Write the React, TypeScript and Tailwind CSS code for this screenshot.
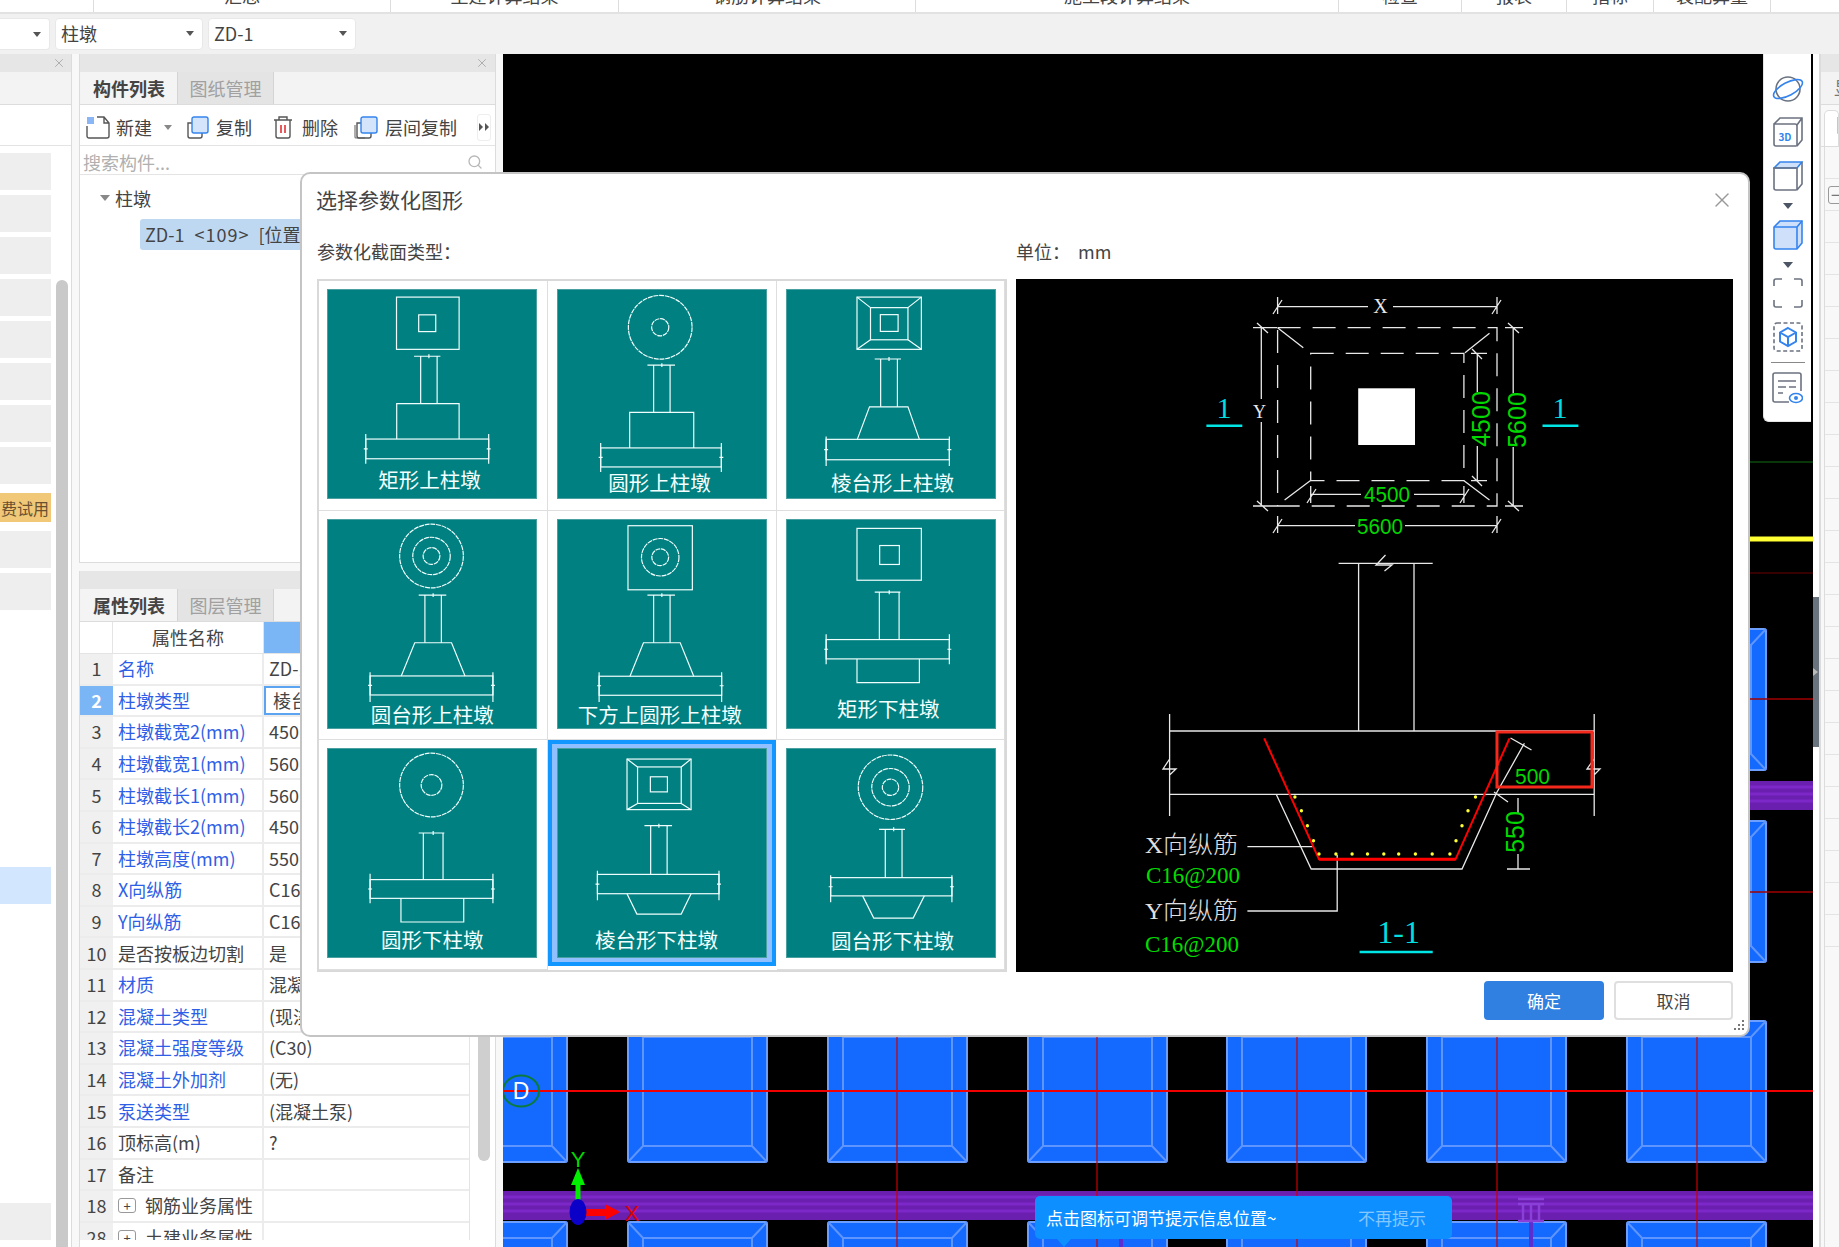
import type { ReactNode } from "react";
import { Search, X } from "lucide-react";

const topTabs = [
  { w: "w-[94px]", label: "" },
  { w: "w-[297px]", label: "汇总" },
  { w: "w-[228px]", label: "土建计算结果" },
  { w: "w-[297px]", label: "钢筋计算结果" },
  { w: "w-[423px]", label: "施工段计算结果" },
  { w: "w-[123px]", label: "检查" },
  { w: "w-[105px]", label: "报表" },
  { w: "w-[87px]", label: "指标" },
  { w: "w-[117px]", label: "装配算量" },
];

const rows: { n: number; name: string; value: string; blue?: boolean; plus?: boolean }[] = [
  { n: 1, name: "名称", value: "ZD-1", blue: true },
  { n: 2, name: "柱墩类型", value: "棱台形下柱墩", blue: true },
  { n: 3, name: "柱墩截宽2(mm)", value: "450", blue: true },
  { n: 4, name: "柱墩截宽1(mm)", value: "560", blue: true },
  { n: 5, name: "柱墩截长1(mm)", value: "560", blue: true },
  { n: 6, name: "柱墩截长2(mm)", value: "450", blue: true },
  { n: 7, name: "柱墩高度(mm)", value: "550", blue: true },
  { n: 8, name: "X向纵筋", value: "C16@200", blue: true },
  { n: 9, name: "Y向纵筋", value: "C16@200", blue: true },
  { n: 10, name: "是否按板边切割", value: "是" },
  { n: 11, name: "材质", value: "混凝土", blue: true },
  { n: 12, name: "混凝土类型", value: "(现浇混凝土)", blue: true },
  { n: 13, name: "混凝土强度等级", value: "(C30)", blue: true },
  { n: 14, name: "混凝土外加剂", value: "(无)", blue: true },
  { n: 15, name: "泵送类型", value: "(混凝土泵)", blue: true },
  { n: 16, name: "顶标高(m)", value: "?" },
  { n: 17, name: "备注", value: "" },
  { n: 18, name: "钢筋业务属性", value: "", plus: true },
  { n: 28, name: "土建业务属性", value: "", plus: true },
];

function Ring({ cx, cy, r }: { cx: number; cy: number; r: number }) {
  return <circle cx={cx} cy={cy} r={r} strokeDasharray="5 0.8" />;
}

function RectPlan({ o, i }: { o: number[]; i: number[] }) {
  return (
    <>
      <rect x={o[0]} y={o[1]} width={o[2] - o[0]} height={o[3] - o[1]} />
      <rect x={i[0]} y={i[1]} width={i[2] - i[0]} height={i[3] - i[1]} />
    </>
  );
}

function FrustumPlan({ o, m, i }: { o: number[]; m: number[]; i: number[] }) {
  return (
    <>
      <RectPlan o={o} i={m} />
      <rect x={i[0]} y={i[1]} width={i[2] - i[0]} height={i[3] - i[1]} />
      <path
        d={`M${o[0]} ${o[1]}L${m[0]} ${m[1]}M${o[2]} ${o[1]}L${m[2]} ${m[1]}M${o[0]} ${o[3]}L${m[0]} ${m[3]}M${o[2]} ${o[3]}L${m[2]} ${m[3]}`}
      />
    </>
  );
}

const tiles: {
  label: string;
  lx: number;
  ly: number;
  plan: ReactNode;
  col: number[];
  slab: number[];
  ped: string;
  selected?: boolean;
}[] = [
  {
    label: "矩形上柱墩",
    lx: 103,
    ly: 200,
    plan: <RectPlan o={[69.5, 6.7, 133, 59.7]} i={[92, 24.7, 109.3, 41.7]} />,
    col: [66.7, 87.3, 114, 94, 110.7, 114.7],
    slab: [38.3, 163, 150.7, 170.7, 145.7, 175.7],
    ped: "69.7,150.7 69.7,114.7 133,114.7 133,150.7",
  },
  {
    label: "圆形上柱墩",
    lx: 103,
    ly: 203,
    plan: (
      <>
        <Ring cx={103.7} cy={37.3} r={32.3} />
        <Ring cx={103.7} cy={37.3} r={8.7} />
      </>
    ),
    col: [75.7, 90.7, 118.7, 97, 113.7, 123.7],
    slab: [43.3, 165.7, 159.7, 179, 154.7, 184],
    ped: "72.7,159.7 72.7,123.7 137.7,123.7 137.7,159.7",
  },
  {
    label: "棱台形上柱墩",
    lx: 107,
    ly: 203,
    plan: <FrustumPlan o={[71, 6.7, 136.3, 59.7]} m={[84.7, 17.4, 122.7, 50]} i={[94.7, 24.5, 112.7, 41.5]} />,
    col: [69.5, 89, 115.7, 95, 112, 118],
    slab: [39.7, 164.7, 151, 171.7, 148, 178],
    ped: "71.3,151 83.7,118 122.7,118 134.3,151",
  },
  {
    label: "圆台形上柱墩",
    lx: 105.7,
    ly: 205,
    plan: (
      <>
        <Ring cx={105} cy={36} r={32.3} />
        <Ring cx={105} cy={36} r={19} />
        <Ring cx={105} cy={36} r={8.5} />
      </>
    ),
    col: [75.7, 92, 120, 98.3, 115, 124],
    slab: [42.7, 167.3, 157.7, 177, 154, 184],
    ped: "74.3,157.7 88,124 125.3,124 139,157.7",
  },
  {
    label: "下方上圆形上柱墩",
    lx: 103.3,
    ly: 205,
    plan: (
      <>
        <rect x={71} y={5.3} width={65.3} height={65} />
        <Ring cx={103.7} cy={37.3} r={19} />
        <Ring cx={103.7} cy={37.3} r={8.5} />
      </>
    ),
    col: [75.7, 90.7, 118.7, 97, 113.7, 124],
    slab: [41.7, 166, 158, 177.3, 154, 184],
    ped: "73,158 86.7,124 124,124 137.7,158",
  },
  {
    label: "矩形下柱墩",
    lx: 102.7,
    ly: 199,
    plan: <RectPlan o={[71, 8, 136.3, 60.6]} i={[94, 25.4, 114, 44.6]} />,
    col: [72.7, 89, 115, 93.7, 113.7, 120.8],
    slab: [39.7, 164.7, 120.8, 140.4, 115.5, 145.8],
    ped: "71,140.4 71,164.5 134.3,164.5 134.3,140.4",
  },
  {
    label: "圆形下柱墩",
    lx: 105.7,
    ly: 201.7,
    plan: (
      <>
        <Ring cx={105} cy={36} r={32.3} />
        <Ring cx={105} cy={36} r={10.5} />
      </>
    ),
    col: [84.7, 92, 118, 96.7, 116.7, 132],
    slab: [42.7, 167.3, 132, 151, 126, 156],
    ped: "74,151 74,175 137.7,175 137.7,151",
  },
  {
    label: "棱台形下柱墩",
    lx: 100,
    ly: 201.7,
    selected: true,
    plan: <FrustumPlan o={[70, 9.7, 135, 61]} m={[80.7, 17.7, 125, 54.7]} i={[93.7, 27.7, 111, 43]} />,
    col: [77.3, 87.7, 115.7, 94, 110.7, 126.7],
    slab: [40, 163.3, 126.7, 146.3, 123, 153],
    ped: "70,146.3 80,167 125,167 135,146.3",
  },
  {
    label: "圆台形下柱墩",
    lx: 107,
    ly: 202,
    plan: (
      <>
        <Ring cx={105} cy={38.3} r={32.7} />
        <Ring cx={105} cy={38.3} r={19} />
        <Ring cx={105} cy={38.3} r={8.3} />
      </>
    ),
    col: [81, 93.3, 119.7, 99.7, 116.7, 130],
    slab: [44.3, 167.3, 130, 148.5, 127.5, 155],
    ped: "76.7,148.5 88,171 128,171 139.3,148.5",
  },
];

function Tile({ t }: { t: (typeof tiles)[number] }) {
  const [dy, dx1, dx2, cx1, cx2, cy] = t.col;
  const [x1, x2, y1, y2, e1, e2] = t.slab;
  const mid = (y1 + y2) / 2;
  const m = (cx1 + cx2) / 2;
  return (
    <svg width="210" height="210" viewBox="0 0 211 210" className="block bg-[#008080] border border-[#4aa0a0]">
      <g stroke="#f2ffff" strokeWidth="1.2" fill="none">
        {t.plan}
        <path d={`M${dx1} ${dy}H${dx2}M${cx1} ${dy}V${cy}M${cx2} ${dy}V${cy}M${m} ${dy - 2}v4`} />
        <rect x={x1} y={y1} width={x2 - x1} height={y2 - y1} />
        <path d={`M${x1} ${e1}V${e2}M${x2} ${e1}V${e2}M${x1 - 2} ${mid}h4M${x2 - 2} ${mid}h4`} />
        <polyline points={t.ped} />
      </g>
      <text x={t.lx} y={t.ly} textAnchor="middle" fontSize="20.8" fill="#f4ffff">
        {t.label}
      </text>
    </svg>
  );
}

function Preview() {
  const white = { stroke: "#e8e8e8", strokeWidth: 1.3, fill: "none" };
  const num = { fill: "#00d800", fontFamily: "'Liberation Sans', sans-serif" };
  const serif = "'Liberation Serif', 'Noto Sans CJK SC', serif";
  return (
    <svg width="717" height="693" viewBox="0 0 717 693" className="block bg-black">
      <g {...white}>
        <path d="M261.6 27.7H352M377 27.7H481M261.6 18V35M481 18V35M257 35L266 21M476 35L485 21" />
        <rect x="261.6" y="48.7" width="219.4" height="178.3" strokeDasharray="23 12" />
        <rect x="294.7" y="74.3" width="153.2" height="127.4" strokeDasharray="23 12" />
        <path d="M261.6 48.7L287.3 68.7M473.5 54.3L449 73.7M268.6 221L294.2 201.7M473.5 221L448 201.7" />
        <path d="M245.3 48.7V120M245.3 143V227M237 48.7H261M237 227H261M241 44L252 54M241 222L252 232" />
        <path d="M497.2 48.7V114M497.2 168V227M489 48.7H507M489 227H507M492 44L503 54M492 222L503 232" />
        <path d="M461.3 74.3V113M461.3 167V201.7M455 74.3H471M455 201.7H471M456 70L466 80M456 197L466 207" />
        <path d="M294.7 215.3H345M398 215.3H447.9M294.7 207V224M447.9 207V224M291 224L300 210M444 224L453 210" />
        <path d="M261.6 246.7H339M389 246.7H481M261.6 237V254M481 237V254M257 254L266 240M476 254L485 240" />
        <path d="M322.6 284.3H416.7M342.6 284.3V452M398 284.3V452M369.5 276L360 286H376L368.5 292" />
        <path d="M153.6 452H578.2M153.6 515.3H578.2M153.6 435V537M578.2 435V537M153.6 480L147 490H160L153.6 496M578 480L571 490H584L578 496" />
        <polyline points="260.2,515.3 295.2,590 446,590 480,515.3" />
        <path d="M480.5 514L508.4 464.3M494.5 459L515.5 471M478 513L492 523" />
        <path d="M502 519V534M502 575V590M491 590H514" />
        <path d="M231.4 567.7H296.7M231.4 632H321.2V576" />
      </g>
      <rect x="342.2" y="109.3" width="56.8" height="56.7" fill="#fff" />
      <polyline points="248.2,459.3 303,580.3 439.5,580.3 493.5,459.3" fill="none" stroke="#f00" strokeWidth="2" />
      <path d="M303 580.3H439.5" stroke="#f00" strokeWidth="3" />
      <rect x="481" y="453" width="95" height="55" fill="none" stroke="#f5281c" strokeWidth="3" />
      <g fill="#ffff33">
        {[
          [303, 575],
          [319.9, 575],
          [336.1, 575],
          [351.5, 575],
          [367.8, 575],
          [382.7, 575],
          [399.4, 575],
          [416.2, 575],
          [433.9, 575],
          [278.9, 518],
          [285.4, 531.7],
          [291.4, 546.7],
          [297.5, 561.7],
          [459.5, 518],
          [452, 531.7],
          [446, 546.7],
          [440, 561.7],
        ].map(([x, y]) => (
          <circle key={`${x}-${y}`} cx={x} cy={y} r="1.7" />
        ))}
      </g>
      <text x="364.5" y="34" textAnchor="middle" fontSize="20" fill="#e8e8e8" fontFamily={serif}>X</text>
      <text x="243.5" y="139" textAnchor="middle" fontSize="18" fill="#e8e8e8" fontFamily={serif}>Y</text>
      <g fontSize="25" {...num}>
        <text transform="rotate(-90 465 140)" x="465" y="149" textAnchor="middle">4500</text>
        <text transform="rotate(-90 501 141)" x="501" y="150" textAnchor="middle">5600</text>
        <text transform="rotate(-90 499 553)" x="499" y="562" textAnchor="middle">550</text>
      </g>
      <g fontSize="22" {...num}>
        <text x="348" y="223" textLength="46" lengthAdjust="spacingAndGlyphs">4500</text>
        <text x="341" y="255" textLength="46" lengthAdjust="spacingAndGlyphs">5600</text>
        <text x="499" y="505" textLength="35" lengthAdjust="spacingAndGlyphs">500</text>
      </g>
      <g fontSize="30" fill="#00dede" fontFamily={serif} textAnchor="middle">
        <text x="208" y="139">1</text>
        <text x="544" y="139">1</text>
        <text x="382.7" y="664" fontSize="32">1-1</text>
      </g>
      <path d="M190.4 146.7H226.3M526.5 146.7H562.4M343.6 673H416.7" stroke="#00e5e5" strokeWidth="2.5" />
      <g fontSize="24" fontFamily={serif} fill="#e0e0e0" fontWeight="300">
        <text x="129" y="574" textLength="93" lengthAdjust="spacingAndGlyphs">X向纵筋</text>
        <text x="129" y="640" textLength="93" lengthAdjust="spacingAndGlyphs">Y向纵筋</text>
      </g>
      <g fontSize="24" fontFamily={serif} fill="#00dc00">
        <text x="130" y="604" textLength="94" lengthAdjust="spacingAndGlyphs">C16@200</text>
        <text x="129" y="673" textLength="94" lengthAdjust="spacingAndGlyphs">C16@200</text>
      </g>
    </svg>
  );
}

function Dialog() {
  return (
    <div className="absolute left-[300px] top-[172px] w-[1450px] h-[865px] bg-white rounded-[10px] border-2 border-[#c4c4c4] flex flex-col z-10">
      <div className="h-[56px] shrink-0 flex items-center justify-between pl-[14px] pr-[14px] pb-[4px]">
        <span className="text-[21px] text-[#444]">选择参数化图形</span>
        <X size={24} strokeWidth={1.4} className="text-[#999]" />
      </div>
      <div className="h-[49px] shrink-0 flex items-center pb-[6px] pl-[15px] text-[18px] text-[#444]">
        <span className="w-[699px]">参数化截面类型：</span>
        <span>单位：&nbsp;&nbsp;mm</span>
      </div>
      <div className="flex pl-[15px] gap-[9px]">
        <div className="w-[690px] h-[693px] border-2 border-[#d9d9d9] grid grid-cols-[229px_229px_1fr] grid-rows-3">
          {tiles.map((t, i) =>
            t.selected ? (
              <div key={t.label} className="w-[228px] h-[226px] border-[4px] border-[#1296ff] bg-[#90c0ff] pt-[4px] pl-[5px]">
                <Tile t={t} />
              </div>
            ) : (
              <div key={t.label} className={i % 3 === 0 ? "border-r border-b border-[#dedede] p-[8px]" : "border-r border-b border-[#dedede] py-[8px] pl-[9px]"}>
                <Tile t={t} />
              </div>
            ),
          )}
        </div>
        <Preview />
      </div>
      <div className="flex justify-end gap-[10px] pr-[15px] pt-[9px]">
        <button className="w-[120px] h-[39px] rounded-[4px] bg-[#2f80e0] text-white text-[17px]">确定</button>
        <button className="w-[119px] h-[39px] rounded-[4px] border-2 border-[#dfdfdf] bg-white text-[17px] text-[#444]">取消</button>
      </div>
      <svg width="14" height="14" viewBox="0 0 14 14" className="absolute right-[2px] bottom-[2px]" fill="#777">
        <rect x="10" y="1" width="2" height="2" />
        <rect x="6" y="5" width="2" height="2" />
        <rect x="10" y="5" width="2" height="2" />
        <rect x="2" y="9" width="2" height="2" />
        <rect x="6" y="9" width="2" height="2" />
        <rect x="10" y="9" width="2" height="2" />
      </svg>
    </div>
  );
}

function CanvasDrawing() {
  const xs = [428, 628, 828, 1028, 1227, 1427, 1627];
  const ys = [629, 821, 1021, 1222];
  return (
    <svg width="1310" height="1193" viewBox="503 54 1310 1193" className="absolute inset-0">
      <path d="M502 462H1813" stroke="#0c4a0c" strokeWidth="1.5" />
      <path d="M502 573H1813" stroke="#4a0000" strokeWidth="1.5" />
      <path d="M502 539H1813" stroke="#ffff33" strokeWidth="5" />
      {ys.map((y) =>
        xs.map((x) => (
          <g key={`${x}-${y}`}>
            <rect x={x} y={y} width="139" height="141" rx="2" fill="#1469ff" stroke="#6c9fff" strokeWidth="2" />
            <path
              d={`M${x + 15} ${y + 16}H${x + 124}V${y + 125}H${x + 15}ZM${x} ${y}L${x + 15} ${y + 16}M${x + 139} ${y}L${x + 124} ${y + 16}M${x} ${y + 141}L${x + 15} ${y + 125}M${x + 139} ${y + 141}L${x + 124} ${y + 125}`}
              fill="none"
              stroke="#5f95ff"
              strokeWidth="2"
            />
          </g>
        )),
      )}
      {[781, 1191].map((y) => (
        <g key={y}>
          <rect x="502" y={y} width="1311" height="29" fill="#6a1fae" />
          <path d={`M502 ${y + 6}H1813M502 ${y + 13}H1813M502 ${y + 20}H1813`} stroke="#7c28c8" strokeWidth="3" />
        </g>
      ))}
      <path d="M897 600V1247M1097 600V1247M1297 600V1247M1497 600V1247M1697 600V1247" stroke="#c80000" strokeWidth="1.2" />
      <path d="M502 699H1813M502 892H1813" stroke="#a00000" strokeWidth="1.5" />
      <path d="M502 1091H1813" stroke="#f00000" strokeWidth="2" />
      <ellipse cx="521" cy="1091" rx="18" ry="15.5" fill="none" stroke="#0c7a3a" strokeWidth="2" />
      <text x="521" y="1099" textAnchor="middle" fontSize="23" fill="#fff" fontFamily="'Liberation Sans', sans-serif">D</text>
      <path d="M1531 1222V1247M1121 1235V1247" stroke="#5a2fd0" strokeWidth="4" />
      <path d="M1518 1199H1544M1518 1204H1544M1523 1204V1222M1531 1204V1222M1539 1204V1222M1518 1221H1544" stroke="#8a3fd8" strokeWidth="2.5" fill="none" />
      <rect x="575.5" y="1182" width="5" height="30" fill="#00f000" />
      <polygon points="571,1185 585,1185 578,1168" fill="#00f000" />
      <text x="578" y="1167" textAnchor="middle" fontSize="22" fontWeight="300" fill="#00d800" fontFamily="'Liberation Sans', sans-serif">Y</text>
      <rect x="578" y="1209" width="28" height="7" fill="#ff0000" />
      <polygon points="605,1204 620,1212 605,1220" fill="#ff0000" />
      <text x="632" y="1221" textAnchor="middle" fontSize="22" fontWeight="300" fill="#e00000" fontFamily="'Liberation Sans', sans-serif">X</text>
      <ellipse cx="578" cy="1212" rx="8.5" ry="13" fill="#0a00c8" />
    </svg>
  );
}

function CadToolbar() {
  const gray = { stroke: "#6b7280", strokeWidth: 1.6, fill: "none" };
  const blue = { stroke: "#3584ee", strokeWidth: 1.6, fill: "none" };
  return (
    <div className="absolute right-[2px] top-0 w-[48px] h-[368px] bg-white rounded-bl-md border-l border-b border-[#e4e4e4] flex flex-col items-center pt-[20px]">
      <svg width="32" height="30" viewBox="0 0 32 30">
        <circle cx="16" cy="15" r="12" {...gray} />
        <ellipse cx="16" cy="15" rx="16" ry="6.5" transform="rotate(-28 16 15)" {...blue} />
      </svg>
      <svg width="30" height="30" viewBox="0 0 30 30" className="mt-[13px]">
        <path d="M1 7h21a2 2 0 0 1 2 2v19a1 1 0 0 1-1 1H3a2 2 0 0 1-2-2ZM1 7l6-6h22v22l-5 6M24 8l5-7" {...gray} />
        <text x="12" y="24" textAnchor="middle" fontSize="10" fontWeight="700" fill="#3584ee">3D</text>
      </svg>
      <svg width="30" height="32" viewBox="0 0 30 32" className="mt-[13px]">
        <path d="M1 8l6-6h22l-5 6Z" fill="#cfe0fb" stroke="#3584ee" strokeWidth="1.6" />
        <path d="M1 8h23v21a1 1 0 0 1-1 1H3a2 2 0 0 1-2-2ZM29 2v22l-5 6" {...gray} />
      </svg>
      <svg width="10" height="6" viewBox="0 0 10 6" className="mt-[11px]" fill="#4b5563">
        <polygon points="0,0 10,0 5,6" />
      </svg>
      <svg width="30" height="32" viewBox="0 0 30 32" className="mt-[10px]">
        <path d="M1 8l6-6h22v22l-5 6H3a2 2 0 0 1-2-2Z" fill="#cfe0fb" stroke="#3584ee" strokeWidth="1.6" />
        <path d="M1 8h23v22M24 8l5-6" {...blue} />
      </svg>
      <svg width="10" height="6" viewBox="0 0 10 6" className="mt-[11px]" fill="#4b5563">
        <polygon points="0,0 10,0 5,6" />
      </svg>
      <svg width="30" height="30" viewBox="0 0 30 30" className="mt-[10px]">
        <path d="M1 8V3a2 2 0 0 1 2-2h6M21 1h6a2 2 0 0 1 2 2v5M29 22v5a2 2 0 0 1-2 2h-6M9 29H3a2 2 0 0 1-2-2v-5" {...gray} />
      </svg>
      <svg width="30" height="30" viewBox="0 0 30 30" className="mt-[14px]">
        <rect x="1" y="1" width="28" height="28" rx="3" strokeDasharray="4 2.5" {...gray} />
        <path d="M15 6l8 4.5v9L15 24l-8-4.5v-9ZM7 10.500l8 4.500 8-4.500M15 15v9" {...blue} strokeWidth="2" />
      </svg>
      <div className="w-[34px] h-[1px] bg-[#888] mt-[10px]" />
      <svg width="31" height="32" viewBox="0 0 31 32" className="mt-[9px]">
        <path d="M29 19V3a2 2 0 0 0-2-2H3a2 2 0 0 0-2 2v25a2 2 0 0 0 2 2h14" {...gray} />
        <path d="M6 9h18M6 15h8M17 15h7M6 21h5" {...gray} />
        <ellipse cx="24" cy="26" rx="6.500" ry="4.500" {...blue} />
        <circle cx="24" cy="26" r="2" fill="#3584ee" />
      </svg>
    </div>
  );
}

function PanelHeader() {
  return (
    <div className="h-[18px] shrink-0 bg-[#e6e6e6] flex items-center justify-end pr-[6px]">
      <X size={14} strokeWidth={1.6} className="text-[#aaa]" />
    </div>
  );
}

function Tabs({ a, b }: { a: string; b: string }) {
  return (
    <div className="h-[33px] shrink-0 bg-[#f3f3f3] border-b border-[#dcdcdc] flex pl-[1px]">
      <div className="w-[96px] flex items-center justify-center font-bold text-[#444] bg-[#f4f4f4]">{a}</div>
      <div className="w-[97px] flex items-center justify-center text-[#a0a0a0] bg-[#e4e4e4] border-x border-[#d4d4d4]">{b}</div>
    </div>
  );
}

function PageIcons({ kind }: { kind: string }) {
  if (kind === "new") {
    return (
      <svg width="24" height="23" viewBox="0 0 24 23" fill="none">
        <path d="M11 1h7l5 6v13a2 2 0 0 1-2 2H3a2 2 0 0 1-2-2V10M18 1v6h5" stroke="#555" strokeWidth="1.4" />
        <rect x="1" y="1" width="7" height="7" fill="#8ab6f5" />
      </svg>
    );
  }
  if (kind === "del") {
    return (
      <svg width="20" height="23" viewBox="0 0 20 23" fill="none">
        <path d="M1 4h18M6 4V1h8v3M3 4v16a2 2 0 0 0 2 2h10a2 2 0 0 0 2-2V4" stroke="#555" strokeWidth="1.4" />
        <path d="M8 9v8M12 9v8" stroke="#e5484d" strokeWidth="1.8" />
      </svg>
    );
  }
  return (
    <svg width="24" height="23" viewBox="0 0 24 23" fill="none">
      {kind === "floor" && <path d="M1 9v12a1 1 0 0 0 1 1h9" stroke="#777" strokeWidth="1.2" />}
      <path d="M7 7H3v13a2 2 0 0 0 2 2h10a2 2 0 0 0 2-2v-3" stroke="#555" strokeWidth="1.4" />
      <rect x="7" y="1" width="16" height="16" rx="2" fill="#d4e4fb" stroke="#3584ee" strokeWidth="1.4" />
    </svg>
  );
}

function ComponentPanel() {
  return (
    <div className="h-[509px] shrink-0 flex flex-col bg-white border-x border-b border-[#dcdcdc]">
      <PanelHeader />
      <Tabs a="构件列表" b="图纸管理" />
      <div className="h-[41px] shrink-0 border-b border-[#e4e4e4] flex items-center pl-[6px] pt-[4px] text-[#444]">
        <div className="flex items-center gap-[6px]">
          <PageIcons kind="new" />
          <span>新建</span>
        </div>
        <svg width="8" height="5" viewBox="0 0 8 5" className="ml-[12px]" fill="#888">
          <polygon points="0,0 8,0 4,5" />
        </svg>
        <div className="flex items-center gap-[7px] ml-[13px]">
          <PageIcons kind="copy" />
          <span>复制</span>
        </div>
        <div className="flex items-center gap-[9px] ml-[21px]">
          <PageIcons kind="del" />
          <span>删除</span>
        </div>
        <div className="flex items-center gap-[7px] ml-[16px]">
          <PageIcons kind="floor" />
          <span>层间复制</span>
        </div>
        <div className="ml-[20px] w-[14px] h-[27px] border border-[#eee] rounded-[3px] flex items-center justify-center">
          <svg width="10" height="8" viewBox="0 0 10 8" fill="#555">
            <polygon points="0,0 4,4 0,8" />
            <polygon points="6,0 10,4 6,8" />
          </svg>
        </div>
      </div>
      <div className="h-[29px] shrink-0 border-b border-[#e4e4e4] flex items-center justify-between pl-[3px] pr-[12px] pt-[4px] text-[#b0b0b0]">
        <span>搜索构件...</span>
        <Search size={16} className="text-[#b8b8b8]" />
      </div>
      <div className="pt-[10px]">
        <div className="flex items-center h-[26px] pl-[20px]">
          <svg width="10" height="6" viewBox="0 0 10 6" fill="#888">
            <polygon points="0,0 10,0 5,6" />
          </svg>
          <span className="ml-[5px]">柱墩</span>
        </div>
        <div className="ml-[60px] mt-[8px] h-[31px] w-[300px] rounded-[3px] bg-[#bfd8f2] flex items-center pl-[5px] whitespace-nowrap">
          <span>ZD-1</span>
          <span className="ml-[10px] tracking-[1px]">&lt;109&gt;</span>
          <span className="ml-[9px]">[位置: 基础层]</span>
        </div>
      </div>
    </div>
  );
}

function AttributePanel() {
  return (
    <div className="mt-[8px] h-[676px] shrink-0 flex flex-col bg-white border-x border-[#dcdcdc]">
      <PanelHeader />
      <Tabs a="属性列表" b="图层管理" />
      <div className="flex h-[618px]">
        <div className="w-[389px] shrink-0 overflow-hidden">
          <div className="flex h-[32px] border-b border-[#e4e4e4]">
            <div className="w-[33px] border-r border-[#e4e4e4]" />
            <div className="w-[151px] border-r border-[#e4e4e4] flex items-center justify-center">属性名称</div>
            <div className="flex-1 bg-[#7ab6f6] flex items-center justify-center text-white">属性值</div>
          </div>
          {rows.map((r) => (
            <div key={r.n} className="flex h-[31.6px] border-b-2 border-[#ececec]">
              <div
                className={
                  r.n === 2
                    ? "w-[33px] bg-[#7ab6f6] text-white font-bold flex items-center justify-center"
                    : "w-[33px] bg-[#f0f0f0] flex items-center justify-center"
                }
              >
                {r.n}
              </div>
              <div className={r.blue ? "w-[151px] border-r-2 border-[#ececec] pl-[5px] flex items-center text-[#2f5fe6]" : "w-[151px] border-r-2 border-[#ececec] pl-[5px] flex items-center"}>
                {r.plus && (
                  <span className="w-[18px] h-[15px] mr-[9px] border border-[#999] rounded-[3px] flex items-center justify-center text-[13px] leading-none">+</span>
                )}
                {r.name}
              </div>
              {r.n === 2 ? (
                <div className="flex-1 pl-[7px] flex items-center border-2 border-[#5aa4f2]">{r.value}</div>
              ) : (
                <div className="flex-1 pl-[5px] flex items-center">{r.value}</div>
              )}
            </div>
          ))}
        </div>
        <div className="flex-1 border-l border-[#e4e4e4] pt-[78px] pl-[8px]">
          <div className="w-[12px] h-[461px] rounded-[6px] bg-[#cfcfcf]" />
        </div>
      </div>
    </div>
  );
}

export default function App() {
  const strip = Array.from({ length: 25 }, (_, i) => i);
  return (
    <div className="relative w-[1839px] h-[1247px] overflow-hidden bg-[#f8f8f8] font-['Noto_Sans_CJK_SC','Liberation_Sans',sans-serif] text-[18px] text-[#444]">
      <div className="h-[14px] flex bg-white border-b-2 border-[#e2e2e2]">
        {topTabs.map((t, i) => (
          <div key={i} className={`${t.w} border-r border-[#ddd] flex items-end justify-center pb-[8px] overflow-hidden leading-[18px]`}>
            {t.label}
          </div>
        ))}
      </div>
      <div className="h-[40px] bg-[#f1f1f1] flex items-center gap-[5px] pl-0">
        <div className="w-[50px] h-[32px] bg-white rounded-r-[4px] border border-l-0 border-[#e8e8e8] flex items-center justify-end pr-[8px]">
          <svg width="8" height="5" viewBox="0 0 8 5" fill="#555"><polygon points="0,0 8,0 4,5" /></svg>
        </div>
        <div className="w-[148px] h-[32px] bg-white rounded-[4px] border border-[#e8e8e8] flex items-center justify-between pl-[5px] pr-[8px] pb-[2px]">
          <span>柱墩</span>
          <svg width="8" height="5" viewBox="0 0 8 5" fill="#555"><polygon points="0,0 8,0 4,5" /></svg>
        </div>
        <div className="w-[148px] h-[32px] bg-white rounded-[4px] border border-[#e8e8e8] flex items-center justify-between pl-[5px] pr-[8px] pb-[2px]">
          <span>ZD-1</span>
          <svg width="8" height="5" viewBox="0 0 8 5" fill="#555"><polygon points="0,0 8,0 4,5" /></svg>
        </div>
      </div>
      <div className="flex h-[1193px]">
        <div className="w-[72px] shrink-0 bg-white border-r border-[#dcdcdc] flex flex-col">
          <div className="h-[18px] shrink-0 bg-[#e6e6e6] flex items-center justify-end pr-[5px]">
            <X size={14} strokeWidth={1.6} className="text-[#aaa]" />
          </div>
          <div className="h-[33px] shrink-0 bg-[#f3f3f3] border-b border-[#dcdcdc]" />
          <div className="h-[41px] shrink-0 border-b border-[#e4e4e4]" />
          <div className="flex flex-1 overflow-hidden">
            <div className="w-[51px] pt-[7px] flex flex-col gap-[5px] shrink-0">
              {strip.map((i) =>
                i === 8 ? (
                  <div key={i} className="h-[29px] my-[4px] shrink-0 bg-[#f0c878] flex items-center justify-end pr-[2px] text-[16px] text-[#6b5030] whitespace-nowrap overflow-hidden">
                    费试用
                  </div>
                ) : i === 17 ? (
                  <div key={i} className="h-[37px] shrink-0 bg-[#d2e6fd]" />
                ) : i === 25 - 1 ? (
                  <div key={i} className="h-[37px] shrink-0" />
                ) : (
                  <div key={i} className={i > 10 ? "h-[37px] shrink-0" : "h-[37px] shrink-0 bg-[#eeeeee]"} />
                ),
              )}
              <div className="h-[37px] shrink-0 bg-[#eeeeee]" />
            </div>
            <div className="ml-[5px] mt-[134px] w-[12px] rounded-t-[6px] bg-[#c9c9c9]" />
          </div>
        </div>
        <div className="w-[7px] shrink-0" />
        <div className="w-[417px] shrink-0 flex flex-col">
          <ComponentPanel />
          <AttributePanel />
        </div>
        <div className="w-[7px] shrink-0" />
        <div className="relative w-[1310px] shrink-0 bg-black overflow-hidden">
          <CanvasDrawing />
          <CadToolbar />
          <div className="absolute left-[532px] top-[1142px] w-[417px] h-[43px] rounded-[5px] bg-[#0d8fff] flex items-center justify-between pl-[11px] pr-[26px] text-[17px] text-white">
            <span>点击图标可调节提示信息位置~</span>
            <span className="text-white/50">不再提示</span>
            <div className="absolute left-[22px] top-[43px] w-0 h-0 border-x-[7px] border-x-transparent border-t-[8px] border-t-[#0d8fff]" />
          </div>
        </div>
        <div className="relative w-[6px] shrink-0 bg-white">
          <div className="absolute left-0 top-[543px] w-[6px] h-[150px] bg-[#69737d] flex items-center">
            <svg width="5" height="8" viewBox="0 0 5 8" fill="#bbb"><polygon points="0,0 5,4 0,8" /></svg>
          </div>
        </div>
        <div className="flex-1 border-l-2 border-[#dcdcdc] flex flex-col overflow-hidden">
          <div className="h-[18px] shrink-0 bg-[#e6e6e6]" />
          <div className="h-[33px] shrink-0 bg-[#f3f3f3] border-b border-[#dcdcdc] pl-[13px] pt-[2px] overflow-hidden whitespace-nowrap text-[#777]">
            显
          </div>
          <div className="h-[42px] shrink-0 bg-[#f8f8f8] border-b border-[#dcdcdc] flex items-end pl-[3px]">
            <div className="w-[20px] h-[36px] bg-white border border-b-0 border-[#dcdcdc] rounded-t-[5px] pl-[11px] text-[#3584ee] overflow-hidden whitespace-nowrap">
              图纸
            </div>
          </div>
          <div className="ml-[3px] border-l border-[#dcdcdc] flex-1 flex flex-col overflow-hidden">
            {strip.map((i) => (
              <div key={i} className="h-[32px] shrink-0 border-b border-[#e4e4e4] flex items-center">
                {i === 1 && <div className="ml-[3px] w-[14px] h-[18px] border border-[#999] rounded-l-[3px] flex items-center pl-[2px] text-[#777]">−</div>}
              </div>
            ))}
          </div>
        </div>
      </div>
      <Dialog />
    </div>
  );
}
